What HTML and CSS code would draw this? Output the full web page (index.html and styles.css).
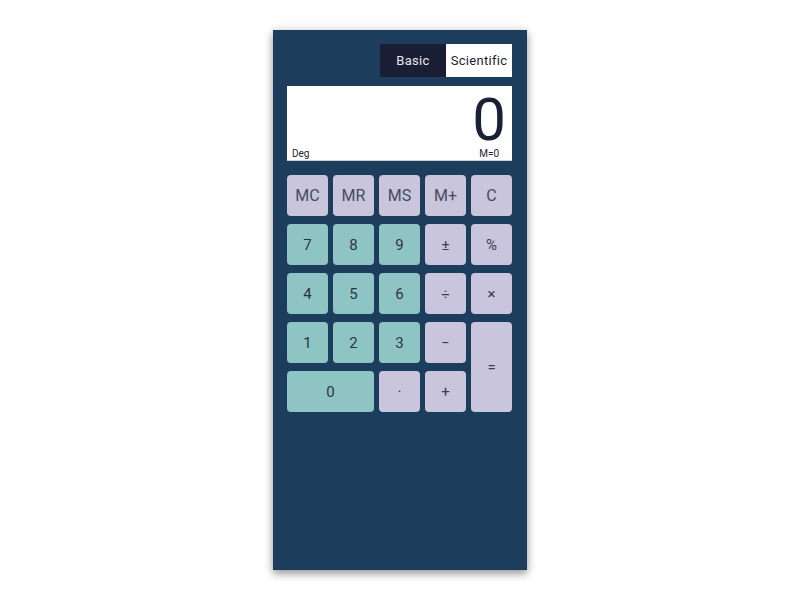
FILE: index.html
```html
<!DOCTYPE html>
<html>
<head>
<meta charset="utf-8">
<link rel="stylesheet" href="styles.css">
</head>
<body>
<div class="calc">
  <div class="modes">
    <button class="mode active">Basic</button>
    <button class="mode">Scientific</button>
  </div>
  <div class="display">
    <div class="value">0</div>
    <div class="status"><span>Deg</span><span>M=0</span></div>
  </div>
  <div class="keys">
    <button class="key mem">MC</button>
    <button class="key mem">MR</button>
    <button class="key mem">MS</button>
    <button class="key mem">M+</button>
    <button class="key mem">C</button>
    <button class="key num">7</button>
    <button class="key num">8</button>
    <button class="key num">9</button>
    <button class="key op">±</button>
    <button class="key op">%</button>
    <button class="key num">4</button>
    <button class="key num">5</button>
    <button class="key num">6</button>
    <button class="key op">÷</button>
    <button class="key op">×</button>
    <button class="key num">1</button>
    <button class="key num">2</button>
    <button class="key num">3</button>
    <button class="key op">−</button>
    <button class="key op eq">=</button>
    <button class="key num zero">0</button>
    <button class="key op">·</button>
    <button class="key op">+</button>
  </div>
</div>
</body>
</html>
```
FILE: styles.css
```css
html, body {
  margin: 0;
  height: 100%;
  background: #ffffff;
}
body {
  display: flex;
  align-items: center;
  justify-content: center;
  font-family: Roboto, "Liberation Sans", sans-serif;
}
.calc {
  width: 254px;
  height: 540px;
  box-sizing: border-box;
  padding: 14px 15px 0 14px;
  background: #1d3d5c;
  box-shadow: 0 4px 8px rgba(0,0,0,0.35), 0 0 10px rgba(0,0,0,0.12);
  display: flex;
  flex-direction: column;
}
.modes {
  display: flex;
  justify-content: flex-end;
  height: 33px;
}
.mode {
  width: 66px;
  height: 33px;
  border: none;
  margin: 0;
  padding: 0;
  font-family: Roboto, "Liberation Sans", sans-serif;
  font-size: 13px;
  letter-spacing: 0.3px;
  background: #ffffff;
  color: #1a1e34;
}
.mode.active {
  background: #1a1e34;
  color: #e6e8ee;
}
.display {
  margin-top: 9px;
  height: 75px;
  background: #ffffff;
  box-sizing: border-box;
  border-bottom: 1px solid #c9ced6;
  display: flex;
  flex-direction: column;
}
.value {
  text-align: right;
  font-size: 60px;
  font-weight: 400;
  line-height: 50px;
  margin-top: 9px;
  padding-right: 6px;
  color: #1a2036;
}
.status {
  margin-top: auto;
  display: flex;
  justify-content: space-between;
  font-size: 10px;
  color: #1d2230;
  line-height: 10px;
  padding: 0 13px 1px 5px;
}
.keys {
  margin-top: 14px;
  display: grid;
  grid-template-columns: repeat(5, 41px);
  grid-template-rows: repeat(5, 41px);
  column-gap: 5px;
  row-gap: 8px;
}
.key {
  border: none;
  margin: 0;
  padding: 0;
  border-radius: 4px;
  font-family: Roboto, "Liberation Sans", sans-serif;
  font-size: 15px;
  color: #2c3444;
}
.mem {
  background: #c8c5dc;
  color: #474b5e;
  font-size: 16px;
}
.op {
  background: #c8c5dc;
  color: #3a3f52;
}
.num {
  background: #8fc4c5;
}
.eq {
  grid-row: span 2;
}
.zero {
  grid-column: span 2;
}
```
